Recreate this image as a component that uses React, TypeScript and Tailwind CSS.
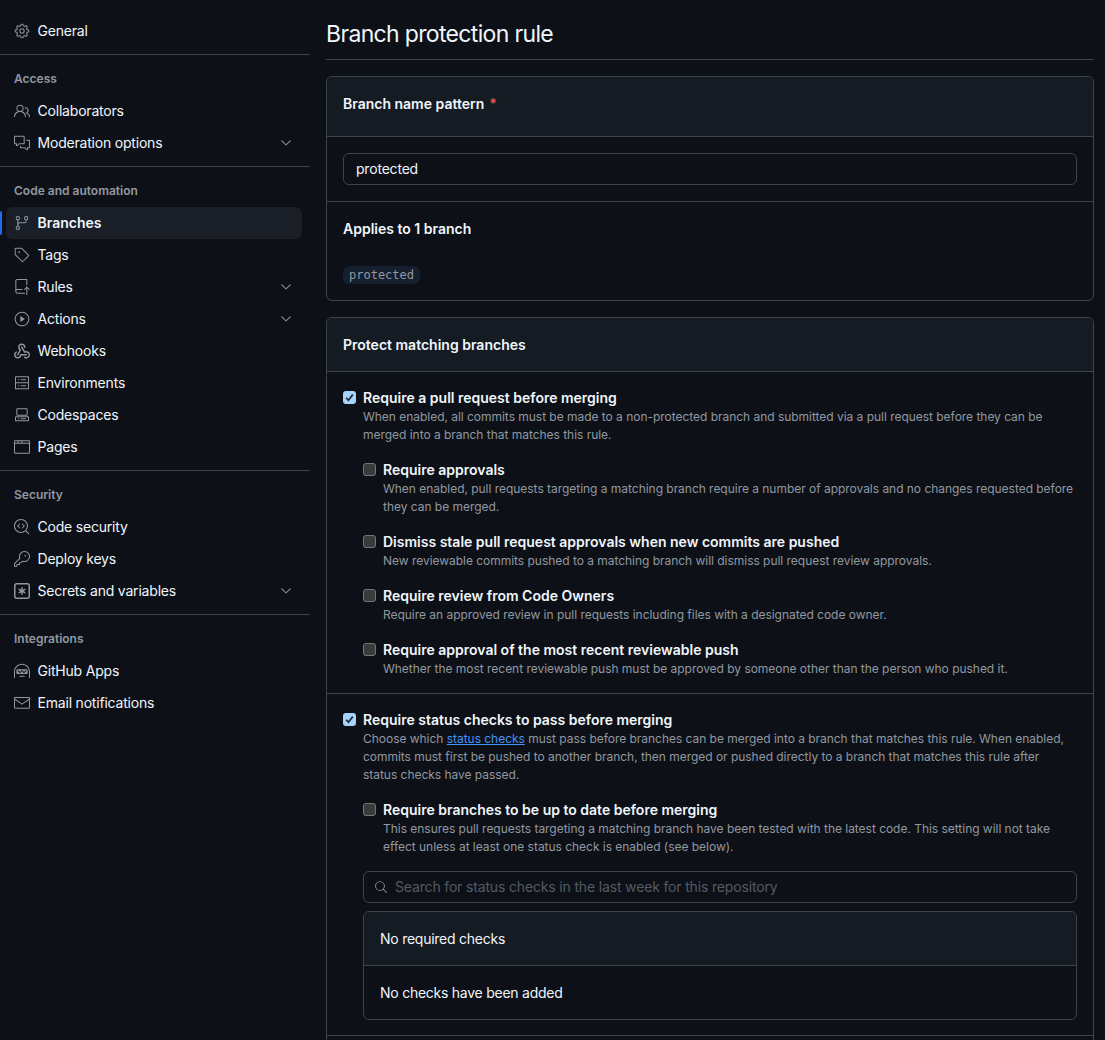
import React from "react";
import {
  GoGear, GoPeople, GoCommentDiscussion, GoGitBranch, GoTag, GoRepoPush, GoPlay,
  GoServer, GoCodespaces, GoBrowser, GoCodescan, GoKey, GoHubot, GoMail,
  GoChevronDown, GoSearch,
} from "react-icons/go";

type IconT = React.ComponentType<{ size?: number; className?: string }>;

function GoWebhook({ size = 16, className }: { size?: number; className?: string }) {
  return (
    <svg width={size} height={size} viewBox="0 0 16 16" fill="currentColor" className={className}>
      <path d="M5.5 4.25a2.25 2.25 0 0 1 4.5 0 .75.75 0 0 0 1.5 0 3.75 3.75 0 1 0-6.14 2.889l-2.272 4.258a.75.75 0 0 0 1.324.706L7 7.25a.75.75 0 0 0-.309-1.015A2.25 2.25 0 0 1 5.5 4.25Z" />
      <path d="M7.364 3.607a.75.75 0 0 1 1.03.257l2.608 4.349a3.75 3.75 0 1 1-.628 6.785.75.75 0 0 1 .752-1.299 2.25 2.25 0 1 0-.033-3.88.75.75 0 0 1-1.03-.256L7.107 4.636a.75.75 0 0 1 .257-1.03Z" />
      <path d="M2.9 8.776A.75.75 0 0 1 2.625 9.8 2.25 2.25 0 1 0 6 11.75a.75.75 0 0 1 .75-.751h5.5a.75.75 0 0 1 0 1.5H7.425a3.751 3.751 0 1 1-5.55-3.998.75.75 0 0 1 1.024.274Z" />
    </svg>
  );
}

function GoKeyAsterisk({ size = 16, className }: { size?: number; className?: string }) {
  return (
    <svg width={size} height={size} viewBox="0 0 16 16" fill="currentColor" className={className}>
      <path d="M0 2.75A2.75 2.75 0 0 1 2.75 0h10.5A2.75 2.75 0 0 1 16 2.75v10.5A2.75 2.75 0 0 1 13.25 16H2.75A2.75 2.75 0 0 1 0 13.25ZM2.75 1.5c-.69 0-1.25.56-1.25 1.25v10.5c0 .69.56 1.25 1.25 1.25h10.5c.69 0 1.25-.56 1.25-1.25V2.75c0-.69-.56-1.25-1.25-1.25Z" />
      <path d="M8 4a.75.75 0 0 1 .75.75V6.7l1.69-.975a.75.75 0 0 1 .75 1.3L9.5 8l1.69.976a.75.75 0 0 1-.75 1.298L8.75 9.3v1.951a.75.75 0 0 1-1.5 0V9.299l-1.69.976a.75.75 0 0 1-.75-1.3L6.5 8l-1.69-.975a.75.75 0 0 1 .75-1.3l1.69.976V4.75A.75.75 0 0 1 8 4Z" />
    </svg>
  );
}

function NavItem({ icon: Icon, label, chevron, active }: { icon: IconT; label: string; chevron?: boolean; active?: boolean }) {
  return (
    <div className={`relative mx-[6px] flex h-8 w-[296px] items-center rounded-md pl-2 pr-2 ${active ? "bg-[#191e27] font-semibold" : "tracking-[-0.2px]"}`}>
      {active && <span className="absolute left-[-6px] top-1 h-6 w-[2px] rounded-r bg-[#1f6feb]" />}
      <Icon size={16} className="mr-[7.5px] shrink-0 text-[#9198a1]" />
      <span className="flex-1 text-[14px] leading-[20px] text-[#f0f6fc]">{label}</span>
      {chevron && <GoChevronDown size={16} className="text-[#9198a1]" />}
    </div>
  );
}

function Group({ title, children }: { title: string; children: React.ReactNode }) {
  return (
    <div className="border-t border-[#3d444d] pb-[7px] pt-[16px]">
      <div className="mb-[8px] h-[16px] pl-[14px] text-[12px] font-semibold leading-[16px] text-[#9198a1]">{title}</div>
      {children}
    </div>
  );
}

function Check({ checked }: { checked?: boolean }) {
  return checked ? (
    <span className="mt-[2px] flex h-[13px] w-[13px] shrink-0 items-center justify-center rounded-[3px] bg-[#a5d3fd]">
      <svg width="11" height="11" viewBox="0 0 11 11" fill="none">
        <path d="M2.2 5.8 4.4 8.2 8.8 2.6" stroke="#22272e" strokeWidth="1.7" />
      </svg>
    </span>
  ) : (
    <span className="mt-[2px] h-[13px] w-[13px] shrink-0 rounded-[3px] border border-[#767676] bg-[#3b3b3b]" />
  );
}

function Option({ title, checked, children, className = "" }: { title: string; checked?: boolean; children: React.ReactNode; className?: string }) {
  return (
    <div className={`flex gap-[7px] ${className}`}>
      <Check checked={checked} />
      <div className="min-w-0 flex-1">
        <div className="h-[18px] text-[14px] font-semibold leading-[18px] text-[#f0f6fc]">{title}</div>
        <p className="mt-[1px] text-[12px] leading-[18px] tracking-[-0.03px] text-[#9198a1]">{children}</p>
      </div>
    </div>
  );
}

export default function App() {
  return (
    <div className="flex h-[1040px] w-[1105px] overflow-hidden bg-[#0d1117] text-[14px] text-[#f0f6fc]" style={{ fontFamily: "Inter, sans-serif" }}>
      <aside className="w-[310px] shrink-0 pt-[15px]">
        <div className="pb-[7px]">
          <NavItem icon={GoGear} label="General" />
        </div>
        <Group title="Access">
          <NavItem icon={GoPeople} label="Collaborators" />
          <NavItem icon={GoCommentDiscussion} label="Moderation options" chevron />
        </Group>
        <Group title="Code and automation">
          <NavItem icon={GoGitBranch} label="Branches" active />
          <NavItem icon={GoTag} label="Tags" />
          <NavItem icon={GoRepoPush} label="Rules" chevron />
          <NavItem icon={GoPlay} label="Actions" chevron />
          <NavItem icon={GoWebhook} label="Webhooks" />
          <NavItem icon={GoServer} label="Environments" />
          <NavItem icon={GoCodespaces} label="Codespaces" />
          <NavItem icon={GoBrowser} label="Pages" />
        </Group>
        <Group title="Security">
          <NavItem icon={GoCodescan} label="Code security" />
          <NavItem icon={GoKey} label="Deploy keys" />
          <NavItem icon={GoKeyAsterisk} label="Secrets and variables" chevron />
        </Group>
        <Group title="Integrations">
          <NavItem icon={GoHubot} label="GitHub Apps" />
          <NavItem icon={GoMail} label="Email notifications" />
        </Group>
      </aside>

      <main className="ml-4 w-[768px] shrink-0">
        <h1 className="mt-[16px] h-[36px] text-[23px] font-normal leading-[36px] tracking-[-0.66px] text-[#f0f6fc]">Branch protection rule</h1>
        <div className="mt-[7px] h-px bg-[#3d444d]" />

        <section className="mt-4 rounded-md border border-[#3d444d]">
          <div className="flex h-[60px] rounded-t-md border-b border-[#3d444d] bg-[#151b23] px-4 pt-[17px] font-semibold leading-[20px]">
            Branch name pattern <span className="ml-[5px] text-[#f85149]">*</span>
          </div>
          <div className="border-b border-[#3d444d] px-4 py-4">
            <div className="flex h-8 items-center rounded-md border border-[#3d444d] px-3 text-[14px] leading-[20px] tracking-[-0.2px] text-[#f0f6fc]">protected</div>
          </div>
          <div className="px-4 pb-4 pt-[17px]">
            <div className="font-semibold leading-[20px]">Applies to 1 branch</div>
            <div className="mt-[27px] flex">
              <code className="h-[18px] rounded-md bg-[#151f2e] px-[6px] text-[12px] leading-[18px] text-[#9198a1]" style={{ fontFamily: '"DejaVu Sans Mono", monospace' }}>protected</code>
            </div>
          </div>
        </section>

        <section className="mt-4 rounded-md border border-[#3d444d]">
          <div className="flex h-[54px] items-center rounded-t-md border-b border-[#3d444d] bg-[#151b23] px-4 font-semibold">Protect matching branches</div>

          <div className="border-b border-[#3d444d] px-4 pb-[15px] pt-[17px]">
            <Option title="Require a pull request before merging" checked>
              When enabled, all commits must be made to a non-protected branch and submitted via a pull request before they can be merged into a branch that matches this rule.
            </Option>
            <div className="pl-5">
              <Option title="Require approvals" className="mt-[17px]">
                When enabled, pull requests targeting a matching branch require a number of approvals and no changes requested before they can be merged.
              </Option>
              <Option title="Dismiss stale pull request approvals when new commits are pushed" className="mt-[17px]">
                New reviewable commits pushed to a matching branch will dismiss pull request review approvals.
              </Option>
              <Option title="Require review from Code Owners" className="mt-[17px]">
                Require an approved review in pull requests including files with a designated code owner.
              </Option>
              <Option title="Require approval of the most recent reviewable push" className="mt-[17px]">
                Whether the most recent reviewable push must be approved by someone other than the person who pushed it.
              </Option>
            </div>
          </div>

          <div className="border-b border-[#3d444d] px-4 pb-[15px] pt-[17px]">
            <Option title="Require status checks to pass before merging" checked>
              Choose which <a className="text-[#4493f8] underline">status checks</a> must pass before branches can be merged into a branch that matches this rule. When enabled, commits must first be pushed to another branch, then merged or pushed directly to a branch that matches this rule after<br />status checks have passed.
            </Option>
            <div className="pl-5">
              <Option title="Require branches to be up to date before merging" className="mt-[17px]">
                This ensures pull requests targeting a matching branch have been tested with the latest code. This setting will not take effect unless at least one status check is enabled (see below).
              </Option>
              <div className="mt-[15px] flex h-8 items-center rounded-md border border-[#3d444d] pl-[10px] text-[14px] leading-[20px] tracking-[-0.16px] text-[#545a63]">
                <GoSearch size={14} className="mr-[7px] text-[#9198a1]" />
                <span>Search for status checks in the last week for this repository</span>
              </div>
              <div className="mt-2 rounded-md border border-[#3d444d] tracking-[-0.25px]">
                <div className="flex h-[54px] items-center rounded-t-md border-b border-[#3d444d] bg-[#151b23] px-4">No required checks</div>
                <div className="flex h-[53px] items-center px-4">No checks have been added</div>
              </div>
            </div>
          </div>
          <div className="h-20" />
        </section>
      </main>
    </div>
  );
}
